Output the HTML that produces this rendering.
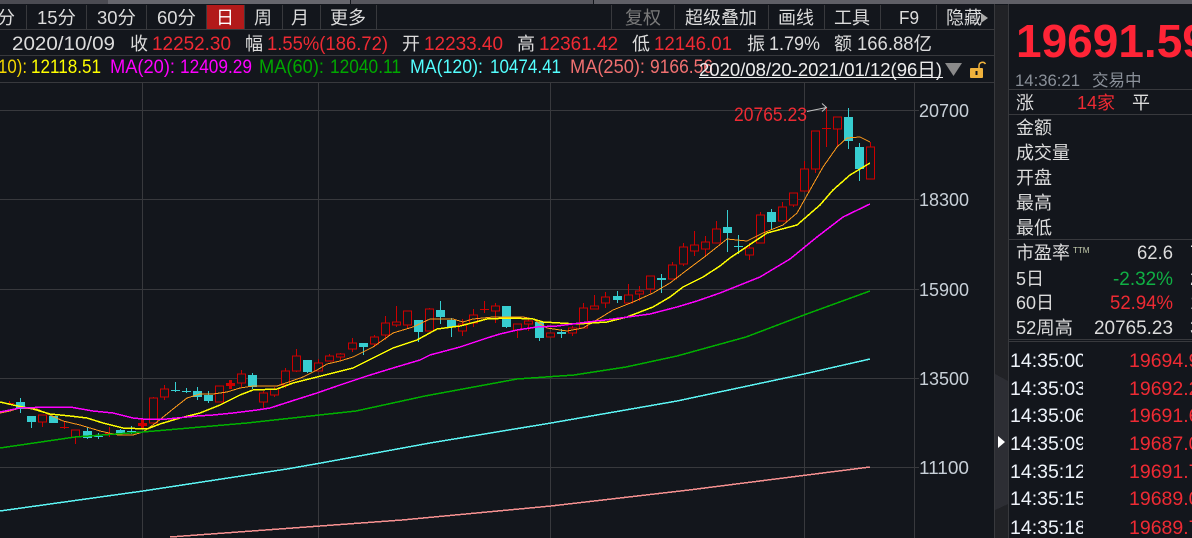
<!DOCTYPE html>
<html><head><meta charset="utf-8">
<style>
html,body{margin:0;padding:0;background:#13161c;overflow:hidden;width:1192px;height:538px}
svg{display:block}
text{font-family:"Liberation Sans","Noto Sans CJK SC",sans-serif;font-size:18px;fill:#dcdcdc}
.r{fill:#ee2a33}.g{fill:#7a7a7a}
.t text{font-size:19px}
.l{stroke:#38393d;stroke-width:1;fill:none}
.m{fill:none;stroke-width:1;shape-rendering:crispEdges}
.b{stroke-width:1.5}
</style></head><body>
<svg width="1192" height="538" viewBox="0 0 1192 538" xmlns="http://www.w3.org/2000/svg">
<defs>
<clipPath id="c1"><rect x="1010" y="350" width="73" height="188"/></clipPath>
</defs>
<rect width="1192" height="538" fill="#13161c"/>
<rect width="108" height="4" fill="#4b4b52"/><rect x="108" width="242" height="4" fill="#66666d"/><rect x="351" width="242" height="4" fill="#56565d"/><rect x="594" width="598" height="4" fill="#5f5f66"/>

<!-- grid -->
<g shape-rendering="crispEdges">
<path class="l" d="M0 29.5H994M0 55.5H994M0 82.5H994M0 110.5H919M0 199.5H919M0 289.5H919M0 378.5H919M0 467.5H919M142.5 83V538M318.5 83V538M550.5 83V538M804.5 83V538M914.5 83V538"/>
<path class="l" d="M26.5 5V29M86.5 5V29M146.5 5V29M206.5 5V29M244.5 5V29M282.5 5V29M320.5 5V29M376.5 5V29M611.5 5V29M674.5 5V29M768.5 5V29M824.5 5V29M880.5 5V29M936.5 5V29"/>
<rect x="207" y="5" width="37" height="24" fill="#b21a1a"/>
<rect x="995" y="5" width="13" height="533" fill="#212226"/>
<polygon points="995,374 1008,381 1008,504 995,510" fill="#2d2e34"/>
<path class="l" d="M994.5 4V538M1008.5 4V538M1009 89.5H1192M1009 114.5H1192M1009 239.5H1192M1009 339.5H1192M1009 341.5H1192"/>
</g>
<polygon points="998,436 1005,442 998,448" fill="#fff"/>

<!-- toolbar -->
<text x="-3" y="24">分</text>
<text x="37" y="24" textLength="39" lengthAdjust="spacingAndGlyphs">15分</text>
<text x="97" y="24" textLength="39" lengthAdjust="spacingAndGlyphs">30分</text>
<text x="157" y="24" textLength="39" lengthAdjust="spacingAndGlyphs">60分</text>
<text x="216" y="24" style="fill:#fff">日</text>
<text x="254" y="24">周</text>
<text x="291" y="24">月</text>
<text x="330" y="24">更多</text>
<text x="625" y="24" class="g">复权</text>
<text x="685" y="24" textLength="72" lengthAdjust="spacingAndGlyphs">超级叠加</text>
<text x="778" y="24">画线</text>
<text x="834" y="24">工具</text>
<text x="899" y="24" textLength="20" lengthAdjust="spacingAndGlyphs">F9</text>
<text x="946" y="24">隐藏</text>
<polygon points="981,13 988,18 981,23" fill="#aaa"/>

<!-- info row -->
<g class="t">
<text x="12" y="50" textLength="103" lengthAdjust="spacingAndGlyphs">2020/10/09</text>
<text x="130" y="50" style="font-size:18px">收</text>
<text x="152" y="50" class="r" textLength="79" lengthAdjust="spacingAndGlyphs">12252.30</text>
<text x="245" y="50" style="font-size:18px">幅</text>
<text x="267" y="50" class="r" textLength="121" lengthAdjust="spacingAndGlyphs">1.55%(186.72)</text>
<text x="402" y="50" style="font-size:18px">开</text>
<text x="424" y="50" class="r" textLength="79" lengthAdjust="spacingAndGlyphs">12233.40</text>
<text x="517" y="50" style="font-size:18px">高</text>
<text x="539" y="50" class="r" textLength="79" lengthAdjust="spacingAndGlyphs">12361.42</text>
<text x="632" y="50" style="font-size:18px">低</text>
<text x="654" y="50" class="r" textLength="78" lengthAdjust="spacingAndGlyphs">12146.01</text>
<text x="747" y="50" style="font-size:18px">振</text>
<text x="769" y="50" textLength="51" lengthAdjust="spacingAndGlyphs">1.79%</text>
<text x="834" y="50" style="font-size:18px">额</text>
<text x="857" y="50" textLength="75" lengthAdjust="spacingAndGlyphs">166.88亿</text>

<!-- MA row -->
<text x="-2" y="73" style="fill:#f5d800" textLength="29" lengthAdjust="spacingAndGlyphs">10):</text>
<text x="31" y="73" style="fill:#ffff00" textLength="70" lengthAdjust="spacingAndGlyphs">12118.51</text>
<text x="110" y="73" style="fill:#ff00ff" textLength="65" lengthAdjust="spacingAndGlyphs">MA(20):</text>
<text x="180" y="73" style="fill:#ff00ff" textLength="72" lengthAdjust="spacingAndGlyphs">12409.29</text>
<text x="259" y="73" style="fill:#00a800" textLength="65" lengthAdjust="spacingAndGlyphs">MA(60):</text>
<text x="330" y="73" style="fill:#00a800" textLength="71" lengthAdjust="spacingAndGlyphs">12040.11</text>
<text x="410" y="73" style="fill:#54ffff" textLength="73" lengthAdjust="spacingAndGlyphs">MA(120):</text>
<text x="490" y="73" style="fill:#54ffff" textLength="71" lengthAdjust="spacingAndGlyphs">10474.41</text>
<text x="570" y="73" style="fill:#f07070" textLength="75" lengthAdjust="spacingAndGlyphs">MA(250):</text>
<text x="650" y="73" style="fill:#f07070" textLength="63" lengthAdjust="spacingAndGlyphs">9166.56</text>
<text x="699" y="76" style="fill:#eee;font-size:18px" textLength="243" lengthAdjust="spacingAndGlyphs">2020/08/20-2021/01/12(96日)</text>
</g>
<rect x="699" y="77" width="244" height="1" fill="#eee"/>
<polygon points="945,63 962,63 953.5,76" fill="#8a8a8a"/>
<rect x="970" y="68" width="13" height="10" rx="1" fill="#f0b23c"/>
<rect x="975.5" y="71" width="2" height="4" fill="#13161c"/>
<path d="M979 68v-2.500a3.500 3.500 0 0 1 6.500-1.500" fill="none" stroke="#f0b23c" stroke-width="1.500"/>

<!-- axis labels -->
<g>
<text x="919" y="117" textLength="50" lengthAdjust="spacingAndGlyphs" style="fill:#c8d0d8">20700</text>
<text x="919" y="206" textLength="50" lengthAdjust="spacingAndGlyphs" style="fill:#c8d0d8">18300</text>
<text x="919" y="296" textLength="50" lengthAdjust="spacingAndGlyphs" style="fill:#c8d0d8">15900</text>
<text x="919" y="385" textLength="50" lengthAdjust="spacingAndGlyphs" style="fill:#c8d0d8">13500</text>
<text x="919" y="474" textLength="50" lengthAdjust="spacingAndGlyphs" style="fill:#c8d0d8">11100</text>
</g>

<!-- candles -->
<g shape-rendering="crispEdges">
<path fill="none" stroke="#cc0000" d="M870.500 142V179M837.500 117V147M815.500 131V173M804.500 161V191M793.500 193V207M782.500 202V221M760.500 212V243M749.500 243V260M716.500 221V243M705.500 236V257M694.500 231V256M683.500 243V266M672.500 262V279M650.500 276V293M639.500 286V301M628.500 284V303M605.500 292V308M594.500 295V309M583.500 303V328M572.500 326V336M528.500 319V331M517.500 324V338M495.500 303V323M473.500 309V327M462.500 319V336M429.500 308V331M407.500 311V329M396.500 306V327M385.500 316V340M374.500 335V347M352.500 338V352M340.500 353V360M329.500 354V361M318.500 359V371M296.500 349V372M285.500 368V388M274.500 387V397M263.500 391V408M241.500 370V387M164.500 385V400M153.500 397V423M75.500 430V444M42.500 415V427M826.500 108V147M822 128.500H831M484.500 301V313M480 309.500H489M230.500 380V389M109.500 427V437M105 433.500H114M64.500 421V429M60 427.500H69M9.500 401V405M5 403.500H14"/>
<path fill="#cc0000" d="M226 383h9v3h-9zM138 423h9v3h-9zM141 419h3v10h-3zM229 380h3v9h-3z"/>
<path fill="#13161c" stroke="#cc0000" d="M866.500 147h8v32h-8zM833.500 117h8v12h-8zM811.500 131h8v38h-8zM800.500 169h8v22h-8zM789.500 193h8v12h-8zM778.500 207h8v14h-8zM756.500 215h8v28h-8zM745.500 248h8v7h-8zM712.500 229h8v14h-8zM701.500 242h8v7h-8zM690.500 245h8v6h-8zM679.500 247h8v17h-8zM668.500 265h8v14h-8zM646.500 276h8v13h-8zM635.500 291h8v3h-8zM624.500 295h8v8h-8zM601.500 297h8v6h-8zM590.500 306h8v3h-8zM579.500 308h8v20h-8zM568.500 328h8v5h-8zM546.500 333h8v4h-8zM524.500 321h8v3h-8zM513.500 324h8v6h-8zM491.500 306h8v5h-8zM469.500 315h8v8h-8zM458.500 324h8v7h-8zM425.500 309h8v22h-8zM403.500 311h8v14h-8zM392.500 322h8v3h-8zM381.500 323h8v12h-8zM370.500 337h8v7h-8zM348.500 343h8v6h-8zM336.500 354h8v3h-8zM325.500 356h8v5h-8zM314.500 363h8v8h-8zM292.500 356h8v15h-8zM281.500 371h8v14h-8zM270.500 389h8v6h-8zM259.500 393h8v9h-8zM237.500 374h8v9h-8zM215.500 386h8v16h-8zM160.500 389h8v8h-8zM149.500 398h8v25h-8zM71.500 430h8v7h-8zM38.500 415h8v7h-8z"/>
<path fill="none" stroke="#37cdd0" d="M859.500 143V181M848.500 108V149M771.500 209V229M727.500 210V252M617.500 291V303M561.500 329V338M539.500 322V341M506.500 306V328M451.500 318V337M440.500 301V324M418.500 320V342M363.500 343V355M307.500 360V373M252.500 373V389M208.500 391V403M197.500 387V400M120.500 429V434M87.500 427V439M53.500 416V423M31.500 416V428M20.500 398V413M738.500 235V254M734 246.500H743M661.500 274V293M186.500 388V393M182 391.500H191M175.500 382V392M171 390.500H180M131.500 426V434M127 431.500H136M98.500 433V439M94 436.500H103"/>
<path fill="#37cdd0" d="M855 147h9v22h-9zM844 117h9v24h-9zM767 212h9v10h-9zM723 227h9v6h-9zM613 296h9v4h-9zM557 332h9v2h-9zM535 322h9v16h-9zM502 306h9v21h-9zM447 320h9v7h-9zM436 310h9v7h-9zM414 320h9v12h-9zM359 343h9v4h-9zM303 360h9v12h-9zM248 375h9v12h-9zM204 395h9v6h-9zM193 391h9v6h-9zM116 430h9v3h-9zM83 431h9v7h-9zM49 416h9v7h-9zM27 416h9v6h-9zM16 402h9v7h-9zM657 278h9v2h-9z"/>
</g>

<!-- MA lines -->
<polyline class="m" stroke="#ff9a1a" points="0,413 10,411 20,408 37,409 50,415 63,421 80,425 100,431 118,435 133,435 143,432 157,422 173,409 187,398 200,394 213,394 227,392 240,388 253,386 277,386 283,384 303,377 317,370 327,364 340,361 353,357 373,347 393,333 413,327 430,319 453,319 463,322 473,319 493,317 523,317 533,319 547,328 567,331 583,328 600,318 613,310 633,302 653,293 670,283 687,270 703,258 717,247 727,239 747,241 763,233 783,225 797,213 810,190 823,167 837,147 847,138 860,137 870,142"/>
<polyline class="m b" stroke="#ffff00" points="0,402 13,405 33,409 50,414 70,416 87,418 103,423 123,428 147,429 160,424 180,418 200,413 220,405 240,395 253,390 277,389 293,383 317,377 353,368 373,358 393,348 417,340 437,329 460,326 487,319 510,318 533,319 543,322 577,324 607,322 627,317 653,307 670,297 683,287 703,277 720,266 730,258 767,233 797,225 820,205 833,190 850,175 870,163"/>
<polyline class="m b" stroke="#ff00ff" points="0,412 20,408 50,407 70,407 93,411 113,413 133,418 143,419 167,419 197,416 213,415 233,413 257,410 270,408 298,399 317,393 340,385 367,376 393,368 420,360 430,355 460,347 487,338 500,334 517,330 537,327 557,326 580,323 613,319 650,314 677,307 697,301 720,293 760,277 790,259 817,237 843,217 870,204"/>
<polyline class="m b" stroke="#00b000" points="0,448 75,437 143,432 247,423 356,411 425,396 517,379 574,375 626,367 677,356 746,337 804,315 870,291"/>
<polyline class="m b" stroke="#5cf5f5" points="0,511 143,491 287,469 321,463 430,443 551,423 677,401 804,374 870,359"/>
<polyline class="m b" stroke="#f59090" points="170,537 402,520 551,506 689,490 870,467"/>

<!-- high marker -->
<text x="734" y="121" class="r" style="font-size:19px" textLength="73" lengthAdjust="spacingAndGlyphs">20765.23</text>
<path d="M807 111.500L826.500 107.500M822 103.500L826.500 107.500L822 111.500" fill="none" stroke="#c0c0c0"/>

<!-- right panel -->
<text x="1016" y="57" style="font-size:46px;font-weight:bold;fill:#ff2436">19691.59</text>
<text x="1015" y="86" style="font-size:16.500px;fill:#8a9099" textLength="65" lengthAdjust="spacingAndGlyphs">14:36:21</text>
<text x="1092" y="86" style="font-size:16.500px;fill:#8a9099">交易中</text>
<text x="1016" y="109">涨</text>
<text x="1077" y="109" class="r" textLength="38" lengthAdjust="spacingAndGlyphs">14家</text>
<text x="1132" y="109">平</text>
<text x="1016" y="134">金额</text>
<text x="1016" y="159">成交量</text>
<text x="1016" y="184">开盘</text>
<text x="1016" y="209">最高</text>
<text x="1016" y="234">最低</text>
<text x="1016" y="259">市盈率</text>
<text x="1073" y="253" style="font-size:8px;fill:#c8d0b0">TTM</text>
<text x="1137" y="259" style="font-size:19px" textLength="36" lengthAdjust="spacingAndGlyphs">62.6</text>
<text x="1016" y="285" style="font-size:18px">5日</text>
<text x="1113" y="285" style="font-size:19px;fill:#0fb044" textLength="60" lengthAdjust="spacingAndGlyphs">-2.32%</text>
<text x="1016" y="309">60日</text>
<text x="1110" y="309" class="r" style="font-size:19px" textLength="63" lengthAdjust="spacingAndGlyphs">52.94%</text>
<text x="1016" y="334" textLength="57" lengthAdjust="spacingAndGlyphs">52周高</text>
<text x="1094" y="334" style="font-size:19px" textLength="79" lengthAdjust="spacingAndGlyphs">20765.23</text>
<text x="1190" y="259" style="font-size:19px">7</text>
<text x="1190" y="285" style="font-size:19px">2</text>
<text x="1190" y="309" style="font-size:19px">1</text>
<text x="1190" y="334" style="font-size:19px">3</text>

<g clip-path="url(#c1)">
<text x="1010" y="367" style="font-size:19.500px;fill:#eef3fa">14:35:00</text>
<text x="1010" y="395" style="font-size:19.500px;fill:#eef3fa">14:35:03</text>
<text x="1010" y="422" style="font-size:19.500px;fill:#eef3fa">14:35:06</text>
<text x="1010" y="450" style="font-size:19.500px;fill:#eef3fa">14:35:09</text>
<text x="1010" y="478" style="font-size:19.500px;fill:#eef3fa">14:35:12</text>
<text x="1010" y="505" style="font-size:19.500px;fill:#eef3fa">14:35:15</text>
<text x="1010" y="534" style="font-size:19.500px;fill:#eef3fa">14:35:18</text>
</g>
<g>
<text x="1129" y="367" class="r" style="font-size:19.500px">19694.94</text>
<text x="1129" y="395" class="r" style="font-size:19.500px">19692.24</text>
<text x="1129" y="422" class="r" style="font-size:19.500px">19691.64</text>
<text x="1129" y="450" class="r" style="font-size:19.500px">19687.04</text>
<text x="1129" y="478" class="r" style="font-size:19.500px">19691.74</text>
<text x="1129" y="505" class="r" style="font-size:19.500px">19689.04</text>
<text x="1129" y="534" class="r" style="font-size:19.500px">19689.74</text>
</g>
</svg>
</body></html>
